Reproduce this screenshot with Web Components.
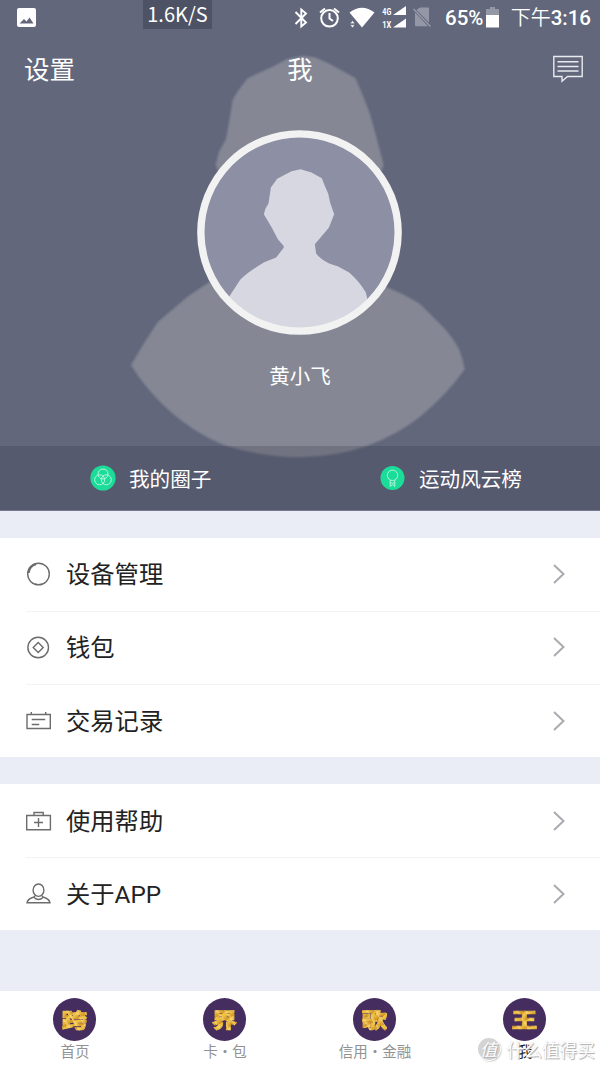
<!DOCTYPE html>
<html lang="zh-CN">
<head>
<meta charset="utf-8">
<meta name="viewport" content="width=device-width, initial-scale=1">
<title>我</title>
<style>
	body {
		margin: 0;
		background: #eaedf6;
		font-family: "Noto Sans CJK SC", sans-serif;
	}
</style>
</head>
<body>
<profile-page></profile-page>

<script>
const icons = {
	device: `<circle cx="12.500" cy="13" r="10.800"/><path d="M2.700 12 A10 10 0 0 1 10 3.300" stroke-width="2"/>`,
	wallet: `<circle cx="12.200" cy="13.500" r="10.300"/><path d="M12.200 8.500 L17.200 13.500 L12.200 18.500 L7.200 13.500 Z"/>`,
	record: `<path d="M1 6.500 H24.300 V20.500 H1 Z M5.300 6.500 V4 M19.700 6.500 V4 M5.700 11.500 H19.200 M5.700 16.500 H13.200"/>`,
	help: `<path d="M.700 7.500 H24.400 V21.700 H.700 Z M8 7.500 V4.500 H17.200 V7.500 M12.500 10 V19 M8 14.500 H17"/>`,
	about: `<ellipse cx="12.500" cy="9.200" rx="5.400" ry="6.200"/><path d="M9.300 14.300 C8.500 17.500 2 16 1 21.800 H24 C23 16 16.500 17.500 15.700 14.300 M8 16.500 Q12.500 20.500 17 16.500"/>`,
};

function define(name, html, setup) {
	const template = document.createElement('template');
	template.innerHTML = html;
	customElements.define(name, class extends HTMLElement {
		constructor() {
			super();
			this.attachShadow({ mode: 'open' });
			this.shadowRoot.appendChild(template.content.cloneNode(true));
		}
		connectedCallback() {
			if (setup) {
				setup(this, this.shadowRoot);
			}
		}
	});
}

define('status-bar', `
	<style>
	:host {
		display: flex;
		box-sizing: border-box;
		height: 36px;
		padding: 0 9px 0 17px;
		color: #fff;
	}
	svg {
		display: block;
		flex: none;
	}
	.photo {
		margin-top: 8px;
	}
	.speed {
		width: 69px;
		height: 29px;
		margin-left: 107px;
		background: #4d5264;
		font-size: 20px;
		line-height: 27px;
		text-align: center;
	}
	.icons {
		margin-left: 80px;
	}
	.battery {
		margin: 7px 0 0 1.500px;
	}
	.pct, .time {
		font: 500 20.500px/37px Roboto, "Noto Sans CJK SC", sans-serif;
		white-space: nowrap;
	}
	.pct {
		margin-left: 12px;
		width: 39px;
	}
	.time {
		margin-left: auto;
	}
	.time span {
		font-size: 20px;
		font-weight: 350;
	}
	</style>
	<svg class="photo" width="19" height="19" viewBox="0 0 19 19"><path fill="#fff" fill-rule="evenodd" d="M2 0H17Q19 0 19 2V17Q19 19 17 19H2Q0 19 0 17V2Q0 0 2 0ZM2.500 15.500H16.500L12.500 9.500L9.500 13.500L7 11Z"/></svg>
	<div class="speed">1.6K/S</div>
	<svg class="icons" width="141" height="36" viewBox="292 0 141 36">
		<path d="M295.500 12 L306 22.500 L301.300 26.500 V9.500 L306 13.500 L295.500 24" fill="none" stroke="#fff" stroke-width="1.900"/>
		<g fill="none" stroke="#fff" stroke-width="2">
			<circle cx="329.500" cy="18.300" r="8.300"/>
			<path d="M329.500 13V18.500L333 21M320 12.500L325 8.500M334 8.500L339 12.500"/>
		</g>
		<path fill="#fff" d="M349.500 12.500 Q362 3 374.500 12.500 L362 27.500Z"/>
		<path fill="#fff" stroke="#62677c" stroke-width=".8" d="M349.800 23.800L352.500 20.500L355.200 23.800Z M349.800 24.800L352.500 28L355.200 24.800Z"/>
		<path fill="#fff" d="M393 15L406 6V15Z M393 27.500L406 18.500V27.500Z"/>
		<g fill="#fff" font-family="Roboto" font-weight="700" font-size="9"><text x="382.300" y="15" textLength="9" lengthAdjust="spacingAndGlyphs">4G</text><text x="382.300" y="27.500" textLength="9" lengthAdjust="spacingAndGlyphs">1X</text></g>
		<path fill="#9497a6" d="M420 7.500H428Q429 7.500 429 8.500V22.500L416.500 10Z M415 12.500L428 26.200H416Q415 26.200 415 25.200Z"/>
		<path stroke="#9497a6" stroke-width="1.600" d="M413.500 9L430.500 26.500"/>
	</svg>
	<div class="pct">65%</div>
	<svg class="battery" width="13" height="21" viewBox="0 0 13 21"><path fill="#9497a6" d="M0 2H4V0H9V2H13V8H0Z"/><path fill="#fff" d="M0 8H13V20.500H0Z"/></svg>
	<div class="time"><span>下午</span>3:16</div>
`);

define('title-bar', `
	<style>
	:host {
		display: grid;
		grid-template-columns: 1fr auto 1fr;
		align-items: center;
		height: 66px;
		padding: 0 17px 0 24px;
		color: #fff;
		font-size: 25.500px;
		line-height: 38px;
	}
	div {
		margin-top: -2px;
	}
	.title {
		margin-left: -7px;
	}
	svg {
		justify-self: end;
	}
	</style>
	<div>设置</div>
	<div class="title">我</div>
	<svg width="30" height="28" viewBox="0 0 30 28" fill="none" stroke="#e9eaee" stroke-width="1.400"><path d="M.8 1.500H29.200V21.500H14.500L9 26.300V21.500H.8ZM4.500 6.700H25.500M4.500 11.500H25.500M4.500 16H25.500"/></svg>
`);

define('user-avatar', `
	<style>
	:host {
		display: block;
		width: 205px;
		height: 205px;
	}
	svg {
		display: block;
	}
	</style>
	<svg width="205" height="205" viewBox="231.500 239.500 615 615">
		<clipPath id="face"><circle cx="539" cy="547" r="290"/></clipPath>
		<circle cx="539" cy="547" r="296" fill="#8d8fa4"/>
		<path clip-path="url(#face)" fill="#d6d7e0" d="M542 357L575 367L606 384L616 410L625 430L631 458L643 492L627 533L585 582L589 610Q598 624 628 640L655 649L688 667Q720 695 738 727L748 770V860H310V770L328 740L361 689Q385 665 433 636L469 622L492 592L491 587L474 567L456 533L432 492L437 475L446 460L453 412L472 386L515 363Z"/>
		<circle cx="539" cy="547" r="296" fill="none" stroke="#f2f2f2" stroke-width="22"/>
	</svg>
`);

define('profile-hero', `
	<style>
	:host {
		display: flex;
		flex-direction: column;
		position: relative;
		height: 511px;
		background: #62677c;
		color: #fff;
	}
	.shade {
		position: absolute;
		inset: 0;
	}
	status-bar, title-bar, user-avatar, .name, nav {
		position: relative;
	}
	user-avatar {
		margin: 28px 0 0 196.800px;
	}
	.name {
		margin-top: 24px;
		font-size: 20.500px;
		line-height: 32px;
		text-align: center;
	}
	nav {
		display: grid;
		grid-template-columns: 300px 300px;
		box-sizing: border-box;
		height: 65px;
		margin-top: auto;
		border-bottom: 1px solid #777a92;
		background: rgba(46, 47, 63, .23);
		background-clip: padding-box;
	}
	</style>
	<svg class="shade" width="600" height="511" viewBox="0 0 600 511">
		<g transform="translate(120 50) scale(.33333)" fill="#858894" style="filter: blur(3px)">
			<path d="M545 18L585 22L625 40L706 84L730 140L750 192L770 265L791 345L760 420H320L287 345L297 305L318 268L330 200L338 150Q350 125 384 84L458 50L500 28Z"/>
			<path d="M270 695L205 738L113 817L75 875L33 945Q70 1005 120 1055Q210 1145 320 1188Q430 1222 540 1222Q650 1220 740 1188Q830 1155 900 1100Q980 1035 1034 958Q1028 925 1018 900Q1000 865 970 832L900 762Q850 730 790 708Z"/>
		</g>
	</svg>
	<status-bar></status-bar>
	<title-bar></title-bar>
	<user-avatar></user-avatar>
	<div class="name"><slot></slot></div>
	<nav><slot name="link"></slot></nav>
`);

define('hero-link', `
	<style>
	:host {
		display: flex;
		align-items: center;
		padding-left: 90px;
		font-size: 20.600px;
		line-height: 30px;
	}
	:host([kind="medal"]) {
		padding-left: 80px;
	}
	svg {
		flex: none;
		margin-right: 13px;
	}
	circle, path {
		fill: none;
		stroke: #b5f5dc;
		stroke-width: 1;
	}
	.disc {
		fill: #1bdc99;
		stroke: none;
	}
	.medal, :host([kind="medal"]) .rings {
		display: none;
	}
	:host([kind="medal"]) .medal {
		display: block;
	}
	</style>
	<svg width="26" height="26" viewBox="0 0 26 26">
		<g class="rings"><circle class="disc" cx="13" cy="13" r="12.600"/><circle cx="13" cy="9" r="5"/><circle cx="9.700" cy="14.800" r="5"/><circle cx="16.300" cy="14.800" r="5"/></g>
		<g class="medal"><circle class="disc" cx="12.500" cy="13" r="12"/><circle cx="12.500" cy="10.300" r="5.200"/><path d="M10.200 15V21.500L12.500 19.500L14.800 21.500V15M10.200 18H14.800"/></g>
	</svg>
	<slot></slot>
`);

define('menu-group', `
	<style>
	:host {
		display: block;
		margin-top: 26.500px;
		background: #fff;
	}
	</style>
	<slot></slot>
`);

define('menu-row', `
	<style>
	:host {
		display: flex;
		align-items: center;
		position: relative;
		box-sizing: border-box;
		height: 73.300px;
		padding: 0 35px 0 26px;
		color: #222;
		font: 24.300px/36px Roboto, "Noto Sans CJK SC", sans-serif;
	}
	:host(:not(:first-child))::before {
		content: "";
		position: absolute;
		top: 0;
		left: 26px;
		right: 0;
		height: 1px;
		background: #f3f3f5;
	}
	.icon {
		flex: none;
		margin-right: 14px;
		fill: none;
		stroke: #6c6c6c;
		stroke-width: 1.400;
	}
	.label {
		padding-top: 2px;
	}
	.arrow {
		margin-left: auto;
		fill: none;
		stroke: #aaaab0;
		stroke-width: 2;
	}
	</style>
	<svg class="icon" width="26" height="26" viewBox="0 0 26 26"></svg>
	<div class="label"><slot></slot></div>
	<svg class="arrow" width="12" height="20" viewBox="0 0 12 20"><path d="M1 1L10.500 10L1 19"/></svg>
`, (el, root) => {
	root.querySelector('.icon').innerHTML = icons[el.getAttribute('icon')];
});

define('tab-item', `
	<style>
	:host {
		display: flex;
		flex: 1;
		flex-direction: column;
		align-items: center;
		padding-top: 7px;
		color: #929292;
		font-size: 14.500px;
		line-height: 20px;
	}
	:host([active]) {
		color: #222;
	}
	.coin {
		display: grid;
		place-items: center;
		width: 43px;
		height: 43px;
		margin-left: -1px;
		border-radius: 50%;
		background: #452e5f;
	}
	b {
		font-size: 23px;
		font-weight: 900;
		line-height: 28px;
		transform: translateY(-1px) scale(1.120, .870);
		color: transparent;
		-webkit-text-stroke: .8px transparent;
		background:
			repeating-linear-gradient(63deg, rgba(255, 236, 150, .450) 0 1px, transparent 3px 7px),
			repeating-linear-gradient(-38deg, #dba02a 0 2px, #f0c045 5px 8px);
		-webkit-background-clip: text;
		background-clip: text;
	}
	</style>
	<div class="coin"><b></b></div>
	<slot></slot>
`, (el, root) => {
	root.querySelector('b').textContent = el.getAttribute('glyph');
});

define('tab-bar', `
	<style>
	:host {
		display: flex;
		height: 76px;
		margin-top: auto;
		background: #fff;
	}
	</style>
	<slot></slot>
`);

define('water-mark', `
	<style>
	:host {
		display: flex;
		align-items: center;
		gap: 7px;
		position: absolute;
		right: 5px;
		bottom: 4px;
		color: #fff;
		font-size: 17.700px;
		line-height: 28px;
		text-shadow: 1px 1px 1px #aaa, 0 0 1px #ccc;
	}
	i {
		width: 22px;
		height: 22px;
		border-radius: 50%;
		background: #d4d4d4;
		box-shadow: 0 0 0 1px #fff, 1px 1px 2px #999;
		font: italic 17px/21px "Noto Sans CJK SC", sans-serif;
		text-align: center;
	}
	</style>
	<i>值</i>
	<span>什么值得买</span>
`);

define('profile-page', `
	<style>
	:host {
		display: flex;
		flex-direction: column;
		position: relative;
		width: 600px;
		height: 1067px;
		overflow: hidden;
	}
	</style>
	<profile-hero>
		黄小飞
		<hero-link slot="link">我的圈子</hero-link>
		<hero-link slot="link" kind="medal">运动风云榜</hero-link>
	</profile-hero>
	<menu-group>
		<menu-row icon="device">设备管理</menu-row>
		<menu-row icon="wallet">钱包</menu-row>
		<menu-row icon="record">交易记录</menu-row>
	</menu-group>
	<menu-group>
		<menu-row icon="help">使用帮助</menu-row>
		<menu-row icon="about">关于APP</menu-row>
	</menu-group>
	<tab-bar>
		<tab-item glyph="跨">首页</tab-item>
		<tab-item glyph="界">卡・包</tab-item>
		<tab-item glyph="歌">信用・金融</tab-item>
		<tab-item glyph="王" active>我</tab-item>
	</tab-bar>
	<water-mark></water-mark>
`);
</script>
</body>
</html>
